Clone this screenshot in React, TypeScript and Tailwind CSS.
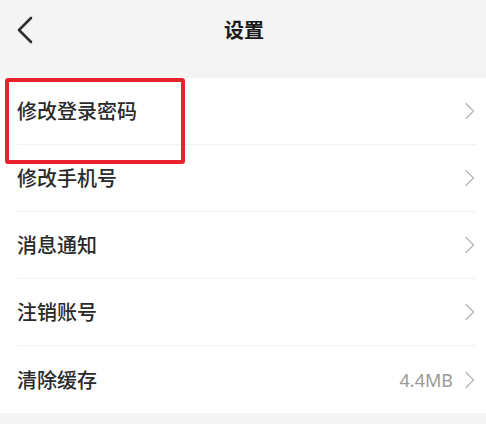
import React from "react";

const font = { fontFamily: '"Noto Sans CJK SC", "Noto Sans", sans-serif' };

function Chevron() {
  return (
    <svg width="12" height="18" viewBox="0 0 12 18" className="shrink-0">
      <path d="M2 1.5 L9.5 9 L2 16.5" fill="none" stroke="#b8b8b8" strokeWidth="1.4" strokeLinecap="round" strokeLinejoin="round" />
    </svg>
  );
}

const rows: { label: string; value?: string }[] = [
  { label: "修改登录密码" },
  { label: "修改手机号" },
  { label: "消息通知" },
  { label: "注销账号" },
  { label: "清除缓存", value: "4.4MB" },
];

export default function App() {
  return (
    <div className="w-[486px] h-[424px] bg-[#f4f4f4] relative overflow-hidden" style={font}>
      <div className="h-[78px] flex items-center relative">
        <svg width="20" height="30" viewBox="0 0 20 30" className="absolute left-[15px] top-[15px]">
          <path d="M16 3 L4 15 L16 27" fill="none" stroke="#2e2e2e" strokeWidth="2.6" strokeLinecap="round" strokeLinejoin="round" />
        </svg>
        <div className="w-full text-center text-[20px] font-bold text-[#1a1a1a] leading-none -mt-[18px] pl-[2px]">设置</div>
      </div>
      <div className="bg-white pl-[17px] pr-[10px]">
        {rows.map((r, i) => (
          <div
            key={r.label}
            className={`h-[67px] flex items-center justify-between ${i < rows.length - 1 ? "border-b border-[#f2f2f2]" : ""}`}
          >
            <span className="text-[20px] font-medium text-[#2a2a2a] leading-none">{r.label}</span>
            <div className="flex items-center gap-[11px]">
              {r.value && <span className="text-[18px] text-[#9a9a9a] leading-none" style={{ fontFamily: '"Noto Sans", sans-serif' }}>{r.value}</span>}
              <Chevron />
            </div>
          </div>
        ))}
      </div>
      <div className="absolute left-[5px] top-[78px] w-[180px] h-[86px] border-[4px] border-[#e8232b] rounded-[3px]" />
    </div>
  );
}
